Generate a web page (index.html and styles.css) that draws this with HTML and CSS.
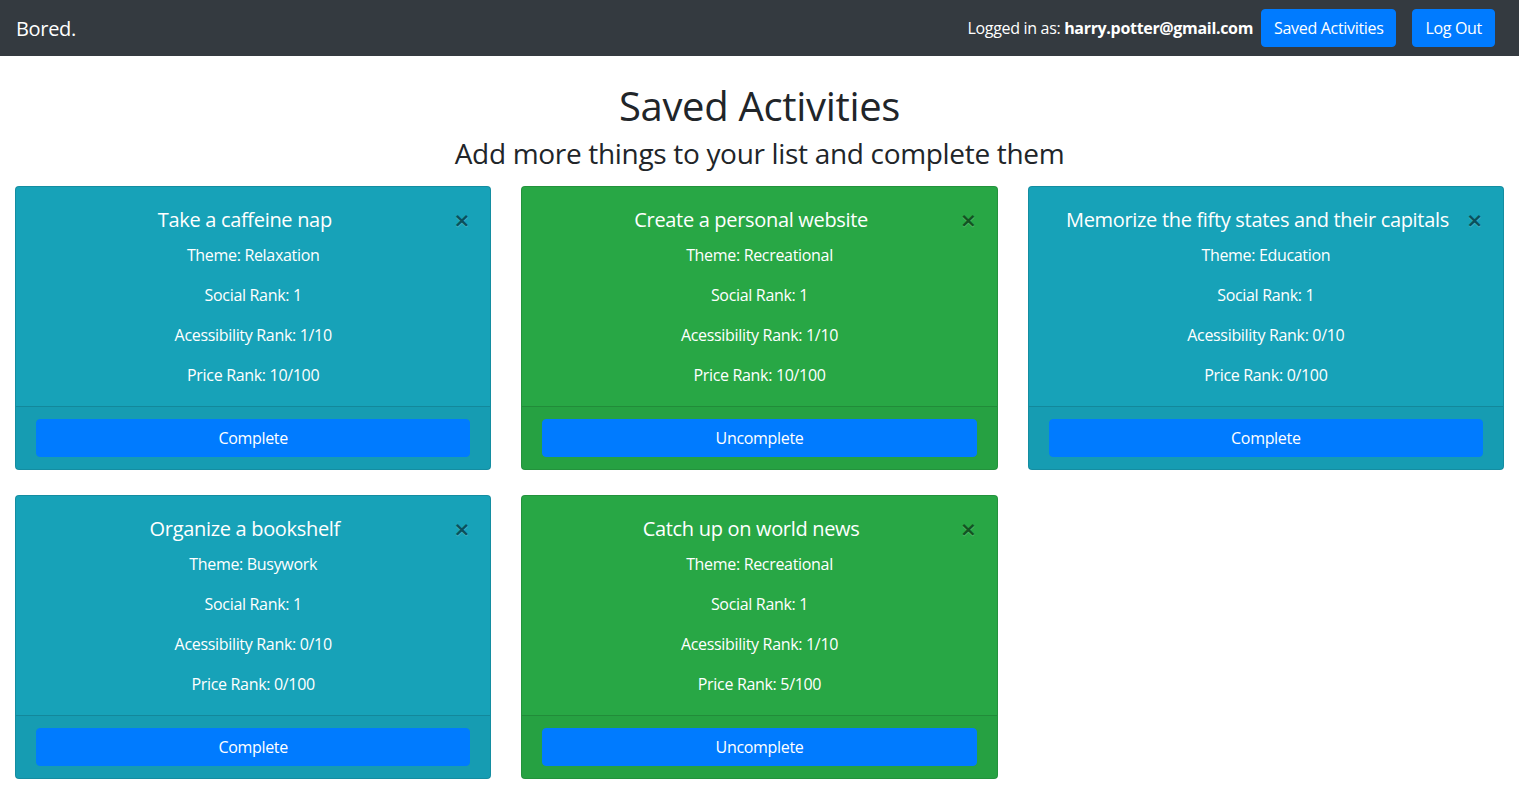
FILE: index.html
```html
<!DOCTYPE html>
<html lang="en">
<head>
<meta charset="utf-8">
<title>Bored.</title>
<link rel="stylesheet" href="styles.css">
</head>
<body>
<nav class="navbar">
  <a class="brand" href="#">Bored.</a>
  <div class="nav-right">
    <span class="user">Logged in as: <b>harry.potter@gmail.com</b></span>
    <button class="btn">Saved Activities</button>
    <button class="btn">Log Out</button>
  </div>
</nav>
<header class="heading">
  <h1>Saved Activities</h1>
  <h3>Add more things to your list and complete them</h3>
</header>
<main class="grid">
  <div class="card info">
    <div class="card-body">
      <button class="close">&times;</button>
      <h5 class="card-title">Take a caffeine nap</h5>
      <p>Theme: Relaxation</p>
      <p>Social Rank: 1</p>
      <p>Acessibility Rank: 1/10</p>
      <p>Price Rank: 10/100</p>
    </div>
    <div class="card-footer"><button class="btn block">Complete</button></div>
  </div>
  <div class="card success">
    <div class="card-body">
      <button class="close">&times;</button>
      <h5 class="card-title">Create a personal website</h5>
      <p>Theme: Recreational</p>
      <p>Social Rank: 1</p>
      <p>Acessibility Rank: 1/10</p>
      <p>Price Rank: 10/100</p>
    </div>
    <div class="card-footer"><button class="btn block">Uncomplete</button></div>
  </div>
  <div class="card info">
    <div class="card-body">
      <button class="close">&times;</button>
      <h5 class="card-title">Memorize the fifty states and their capitals</h5>
      <p>Theme: Education</p>
      <p>Social Rank: 1</p>
      <p>Acessibility Rank: 0/10</p>
      <p>Price Rank: 0/100</p>
    </div>
    <div class="card-footer"><button class="btn block">Complete</button></div>
  </div>
  <div class="card info">
    <div class="card-body">
      <button class="close">&times;</button>
      <h5 class="card-title">Organize a bookshelf</h5>
      <p>Theme: Busywork</p>
      <p>Social Rank: 1</p>
      <p>Acessibility Rank: 0/10</p>
      <p>Price Rank: 0/100</p>
    </div>
    <div class="card-footer"><button class="btn block">Complete</button></div>
  </div>
  <div class="card success">
    <div class="card-body">
      <button class="close">&times;</button>
      <h5 class="card-title">Catch up on world news</h5>
      <p>Theme: Recreational</p>
      <p>Social Rank: 1</p>
      <p>Acessibility Rank: 1/10</p>
      <p>Price Rank: 5/100</p>
    </div>
    <div class="card-footer"><button class="btn block">Uncomplete</button></div>
  </div>
</main>
</body>
</html>
```
FILE: styles.css
```css
* { box-sizing: border-box; }
body {
  margin: 0;
  font-family: "Open Sans", "Noto Sans", Arial, sans-serif;
  font-size: 16px;
  line-height: 1.5;
  letter-spacing: -0.02em;
  color: #212529;
  background: #fff;
}
.navbar {
  background: #343a40;
  display: flex;
  align-items: center;
  justify-content: space-between;
  padding: 8px 16px;
  height: 56px;
}
.brand {
  color: #fff;
  font-size: 20px;
  line-height: 30px;
  padding-top: 2px;
  text-decoration: none;
}
.nav-right {
  display: flex;
  align-items: center;
}
.user { color: #fff; }
.user b { font-weight: 700; }
.btn {
  font-family: inherit;
  font-size: 16px;
  line-height: 24px;
  letter-spacing: inherit;
  padding: 6px 12px;
  border: 1px solid #007bff;
  border-radius: 4px;
  background: #007bff;
  color: #fff;
  cursor: pointer;
}
.nav-right .btn { margin: 0 8px; }
.heading {
  text-align: center;
  padding-top: 26px;
}
h1 {
  margin: 0 0 7px;
  font-size: 40px;
  font-weight: 500;
  line-height: 1.2;
}
h3 {
  margin: 0 0 15px;
  font-size: 28px;
  font-weight: 500;
  line-height: 1.2;
}
.grid {
  display: grid;
  grid-template-columns: repeat(3, 1fr);
  column-gap: 30px;
  row-gap: 25px;
  padding: 0 15px;
}
.card {
  border: 1px solid rgba(0,0,0,.125);
  border-radius: 4px;
  color: #fff;
  display: flex;
  flex-direction: column;
  text-align: center;
  align-self: start;
}
.card.info { background: #17a2b8; }
.card.success { background: #28a745; }
.card-body { padding: 21px 20px 19px; }
.card-title {
  margin: 0 0 11px;
  font-size: 20px;
  font-weight: 500;
  line-height: 1.2;
}
.card-body p { margin: 0 0 16px; }
.card-body p:last-child { margin-bottom: 0; }
.close {
  float: right;
  margin-top: 2px;
  padding: 0;
  background: transparent;
  border: 0;
  font-family: "DejaVu Sans", sans-serif;
  font-size: 20px;
  font-weight: 700;
  line-height: 1;
  color: #000;
  opacity: .5;
  text-shadow: 0 1px 0 rgba(255,255,255,.4);
  cursor: pointer;
}
.card-footer {
  padding: 12px 20px;
  background: rgba(0,0,0,.03);
  border-top: 1px solid rgba(0,0,0,.125);
}
.btn.block { display: block; width: 100%; }
```
